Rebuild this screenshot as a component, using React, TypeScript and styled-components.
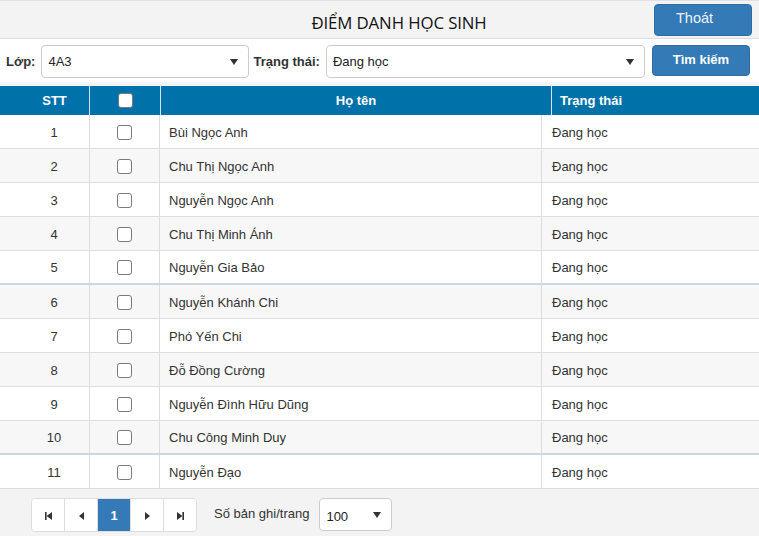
import React from "react";
import styled, { createGlobalStyle } from "styled-components";

const Global = createGlobalStyle`
  html, body { margin: 0; padding: 0; }
  body {
    width: 759px;
    height: 536px;
    overflow: hidden;
    background: #f3f3f3;
    font-family: "Liberation Sans", Arial, sans-serif;
    color: #333;
  }
`;

const Page = styled.div`
  display: flex;
  flex-direction: column;
  width: 759px;
  height: 536px;
  background: #f3f3f3;
`;

const TitleBar = styled.div`
  display: flex;
  align-items: flex-start;
  height: 34px;
  padding-top: 3px;
  border-top: 1px solid #e2e2e2;
  border-bottom: 1px solid #dcdcdc;
  background: #f3f3f3;
`;

const Title = styled.div`
  flex: 1;
  padding-left: 144px;
  padding-top: 7px;
  text-align: center;
  font-family: "Open Sans", sans-serif;
  font-size: 16.8px;
  color: #111;
  letter-spacing: -0.1px;
`;

const PrimaryButton = styled.button<{ $w: number; $h: number; $align?: string }>`
  box-sizing: border-box;
  width: ${(p) => p.$w}px;
  height: ${(p) => p.$h}px;
  background: #337ab7;
  border: 1px solid #2e6da4;
  border-radius: 4px;
  color: #fff;
  font-family: "Liberation Sans", Arial, sans-serif;
  font-size: 14px;
  text-align: ${(p) => p.$align || "center"};
  padding: 0 0 0 ${(p) => (p.$align === "left" ? 21 : 0)}px;
  flex: none;
`;

const ExitButton = styled(PrimaryButton)`
  margin-right: 7px;
  padding-bottom: 5px;
  color: #eef3f8;
  font-size: 14.5px;
`;

const FilterRow = styled.div`
  display: flex;
  align-items: flex-start;
  padding: 6px 0 4px 6px;
  background: #fff;
  margin-bottom: 4px;
`;

const Label = styled.label<{ $ml?: number }>`
  font-weight: bold;
  font-size: 13px;
  color: #333;
  margin-left: ${(p) => p.$ml || 0}px;
  margin-right: 6px;
  padding-top: 9px;
  flex: none;
`;

const SelectBox = styled.div<{ $w: number; $h: number }>`
  display: flex;
  align-items: center;
  justify-content: space-between;
  box-sizing: border-box;
  width: ${(p) => p.$w}px;
  height: ${(p) => p.$h}px;
  background: #fff;
  border: 1px solid #ccc;
  border-radius: 4px;
  padding: 0 10px 0 6px;
  font-size: 13px;
  color: #222;
  flex: none;
`;

const SelectText = styled.span<{ $dy?: number }>`
  position: relative;
  top: ${(p) => p.$dy || 0}px;
`;

const Caret = styled.span`
  width: 0;
  height: 0;
  border-left: 4px solid transparent;
  border-right: 4px solid transparent;
  border-top: 6px solid #333;
`;

const SearchButton = styled(PrimaryButton)`
  margin-left: 7px;
  font-weight: bold;
  font-size: 13px;
  padding-bottom: 3px;
`;

const HeaderRow = styled.div`
  display: grid;
  grid-template-columns: 90px 71px 391px 1fr;
  height: 29px;
  background: #0071a9;
  color: #fff;
  font-weight: bold;
  font-size: 13px;
`;

const HeadCell = styled.div<{ $align?: string; $pl?: number; $last?: boolean }>`
  display: flex;
  align-items: center;
  justify-content: ${(p) => p.$align || "center"};
  padding-left: ${(p) => p.$pl || 0}px;
  border-right: ${(p) => (p.$last ? "none" : "1px solid #d8e6ef")};
`;

const Body = styled.div`
  background: #fff;
`;

const Row = styled.div<{ $alt: boolean; $thick: boolean }>`
  display: grid;
  grid-template-columns: 90px 70px 382px 1fr;
  height: ${(p) => (p.$thick ? 32 : 33)}px;
  background: ${(p) => (p.$alt ? "#f7f7f7" : "#fff")};
  border-bottom: ${(p) => (p.$thick ? "2px solid #cdd6e3" : "1px solid #dddddd")};
  font-size: 13px;
  color: #333;
`;

const Cell = styled.div<{ $align?: string; $pl?: number; $last?: boolean }>`
  display: flex;
  align-items: center;
  justify-content: ${(p) => p.$align || "flex-start"};
  padding-left: ${(p) => p.$pl || 0}px;
  padding-top: 1px;
  border-right: ${(p) => (p.$last ? "none" : "1px solid #dddddd")};
`;

const Check = styled.input.attrs({ type: "checkbox" })`
  appearance: none;
  margin: 0;
  width: 15px;
  height: 15px;
  border: 1px solid #7a7a7a;
  border-radius: 3px;
  background: #fff;
  box-sizing: border-box;
`;

const Footer = styled.div`
  flex: 1;
  display: flex;
  align-items: flex-start;
  padding: 9px 0 0 31px;
  background: #f3f3f3;
`;

const Pager = styled.div`
  display: flex;
  height: 34px;
  box-sizing: border-box;
  border: 1px solid #ddd;
  border-radius: 4px;
  background: #fff;
  overflow: hidden;
`;

const PageBtn = styled.div<{ $active?: boolean }>`
  width: 33px;
  display: flex;
  align-items: center;
  justify-content: center;
  box-sizing: border-box;
  border-left: 1px solid #ddd;
  &:first-child { border-left: none; width: 32px; }
  background: ${(p) => (p.$active ? "#337ab7" : "#fff")};
  color: ${(p) => (p.$active ? "#fff" : "#333")};
  font-weight: bold;
  font-size: 13px;
`;

const PerPage = styled.span`
  margin-left: 17px;
  margin-right: 10px;
  padding-top: 8px;
  font-size: 13px;
  color: #333;
`;

const PagerIcon = ({ kind }: { kind: "first" | "prev" | "next" | "last" }) => {
  const paths: Record<string, React.ReactNode> = {
    first: (
      <>
        <rect x="0" y="0" width="1.6" height="8" />
        <polygon points="7,0 7,8 1.6,4" />
      </>
    ),
    prev: <polygon points="6,0 6,8 1,4" />,
    next: <polygon points="1,0 1,8 6,4" />,
    last: (
      <>
        <polygon points="0,0 0,8 5.4,4" />
        <rect x="5.4" y="0" width="1.6" height="8" />
      </>
    ),
  };
  return (
    <svg width="7" height="8" viewBox="0 0 7 8" fill="#333" style={{ marginTop: 2 }}>
      {paths[kind]}
    </svg>
  );
};

const students = [
  "Bùi Ngọc Anh",
  "Chu Thị Ngọc Anh",
  "Nguyễn Ngọc Anh",
  "Chu Thị Minh Ánh",
  "Nguyễn Gia Bảo",
  "Nguyễn Khánh Chi",
  "Phó Yến Chi",
  "Đỗ Đồng Cường",
  "Nguyễn Đình Hữu Dũng",
  "Chu Công Minh Duy",
  "Nguyễn Đạo",
];

export default function App() {
  return (
    <Page>
      <Global />
      <TitleBar>
        <Title>ĐIỂM DANH HỌC SINH</Title>
        <ExitButton $w={98} $h={32} $align="left">Thoát</ExitButton>
      </TitleBar>
      <FilterRow>
        <Label>Lớp:</Label>
        <SelectBox $w={208} $h={33}>
          <SelectText>4A3</SelectText>
          <Caret />
        </SelectBox>
        <Label $ml={4}>Trạng thái:</Label>
        <SelectBox $w={319} $h={33}>
          <SelectText>Đang học</SelectText>
          <Caret />
        </SelectBox>
        <SearchButton $w={98} $h={31}>Tìm kiếm</SearchButton>
      </FilterRow>
      <HeaderRow>
        <HeadCell $pl={20}>STT</HeadCell>
        <HeadCell $pl={1}>
          <Check aria-label="chọn tất cả" />
        </HeadCell>
        <HeadCell>Họ tên</HeadCell>
        <HeadCell $align="flex-start" $pl={8} $last>
          Trạng thái
        </HeadCell>
      </HeaderRow>
      <Body>
        {students.map((name, i) => (
          <Row key={i} $alt={i % 2 === 1} $thick={i === 4 || i === 9}>
            <Cell $align="center" $pl={19}>{i + 1}</Cell>
            <Cell $align="center">
              <Check aria-label={name} />
            </Cell>
            <Cell $pl={9}>{name}</Cell>
            <Cell $pl={10} $last>
              Đang học
            </Cell>
          </Row>
        ))}
      </Body>
      <Footer>
        <Pager>
          <PageBtn><PagerIcon kind="first" /></PageBtn>
          <PageBtn><PagerIcon kind="prev" /></PageBtn>
          <PageBtn $active>1</PageBtn>
          <PageBtn><PagerIcon kind="next" /></PageBtn>
          <PageBtn><PagerIcon kind="last" /></PageBtn>
        </Pager>
        <PerPage>Số bản ghi/trang</PerPage>
        <SelectBox $w={73} $h={33}>
          <SelectText $dy={2}>100</SelectText>
          <Caret />
        </SelectBox>
      </Footer>
    </Page>
  );
}
